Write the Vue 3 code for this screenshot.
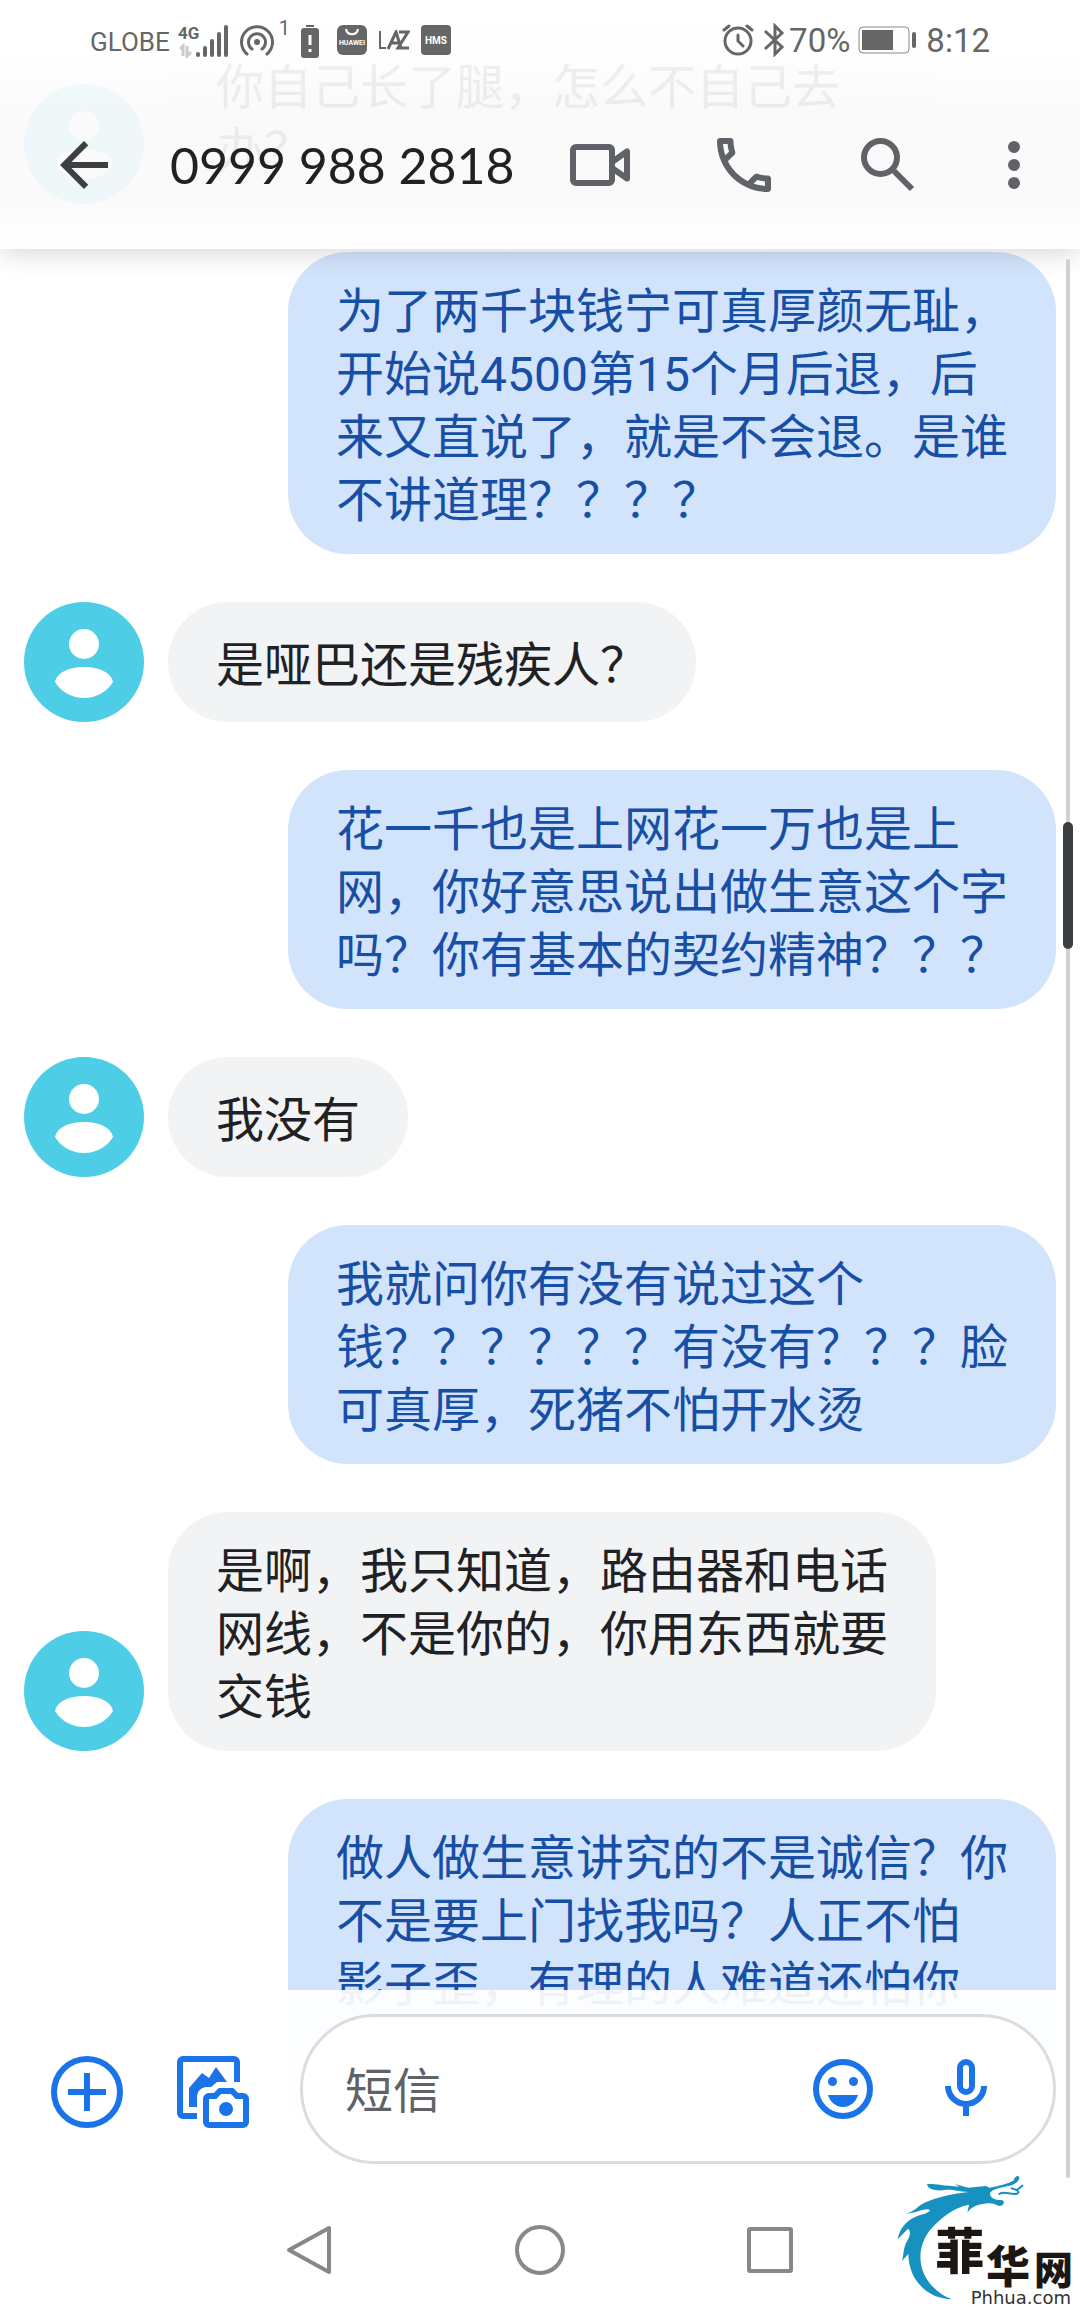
<template>
  <main class="screen">

    <!-- CONVERSATION -->
    <ul class="messages">
      <li
        v-for="(message, index) in messages"
        :key="index"
        class="message"
        :class="message.from"
      >
        <svg v-if="message.from === 'them'" class="avatar" viewBox="0 0 120 120" aria-hidden="true">
          <circle cx="60" cy="60" r="60" fill="#4ecde6" />
          <circle cx="60" cy="42" r="15" fill="#fff" />
          <path d="M31 80C33 70 46 65 60 65s27 5 29 15c-6 10-17 16-29 16s-23-6-29-16z" fill="#fff" />
        </svg>
        <p class="bubble">{{ message.text }}</p>
      </li>
    </ul>

    <div class="scroll-track">
      <div class="scroll-thumb"></div>
    </div>

    <!-- HEADER -->
    <header class="header">
      <div class="status-bar">
        <div class="status-left">
          <span class="carrier">GLOBE</span>
          <svg class="signal" viewBox="0 0 52 36" aria-hidden="true">
            <text x="0" y="17" class="network">4G</text>
            <path d="M2 27l3-3v10M9 24v10l4-4" fill="none" stroke="#ccc" stroke-width="3" />
            <path d="M20 32v1M27 26v7M34 19v14M41 12v21M48 5v28" stroke="#666" stroke-width="4" stroke-linecap="round" />
          </svg>
          <svg class="hotspot" viewBox="0 0 36 36" fill="none" stroke="#666" stroke-width="3" stroke-linecap="round" aria-hidden="true">
            <path d="M8 32a15.500 15.500 0 1 1 20 0" />
            <path d="M13 27a8.500 8.500 0 1 1 10 0" />
            <circle cx="18" cy="20" r="3" fill="#666" stroke="none" />
          </svg>
          <span class="hotspot-count">1</span>
          <svg class="battery-alert" viewBox="0 0 18 36" aria-hidden="true">
            <path d="M5 3h8v2H5z" fill="#666" />
            <rect y="6" width="18" height="30" rx="3" fill="#666" />
            <path d="M9 13v10M9 27v3" stroke="#fff" stroke-width="3" />
          </svg>
          <svg class="badge-huawei" viewBox="0 0 30 30" aria-hidden="true">
            <rect width="30" height="30" rx="6" fill="#666" />
            <path d="M9 4c1 7 11 7 12 0" fill="none" stroke="#fff" stroke-width="2" />
            <text x="15" y="20" text-anchor="middle" class="huawei">HUAWEI</text>
          </svg>
          <svg class="badge-laz" viewBox="0 0 32 20" fill="none" stroke="#666" aria-label="LAZ">
            <path d="M2 1v17h6" stroke-width="2" />
            <path d="M10 19L18 2l5 16M13 13h8M21 2h9L20 18h11" stroke-width="3" />
          </svg>
          <svg class="badge-hms" viewBox="0 0 30 30" aria-hidden="true">
            <rect width="30" height="30" rx="4" fill="#666" />
            <text x="15" y="19" text-anchor="middle" class="hms">HMS</text>
          </svg>
        </div>
        <div class="status-right">
          <svg class="alarm" viewBox="0 0 32 32" fill="none" stroke="#666" stroke-width="3" stroke-linecap="round" aria-hidden="true">
            <circle cx="16" cy="17" r="13" />
            <path d="M16 11v6l5 5M2 6l5-4M30 6l-5-4" />
          </svg>
          <svg class="bluetooth" viewBox="0 0 22 34" fill="none" stroke="#666" stroke-width="3" aria-hidden="true">
            <path d="M2 8l17 16-7 7V3l7 7L2 26" />
          </svg>
          <span>70%</span>
          <svg class="battery" viewBox="0 0 60 28" aria-hidden="true">
            <rect x="1" y="1" width="50" height="26" rx="4" fill="none" stroke="#888" />
            <rect x="4" y="4" width="31" height="20" fill="#666" />
            <rect x="54" y="6" width="4" height="16" rx="2" fill="#666" />
          </svg>
          <span>8:12</span>
        </div>
      </div>

      <div class="title-bar">
        <button class="back" aria-label="返回">
          <svg class="icon" viewBox="0 0 24 24" fill="#3c4043">
            <path d="M20 11H7.830l5.590-5.590L12 4l-8 8 8 8 1.410-1.410L7.830 13H20z" />
          </svg>
        </button>
        <h1 class="title">0999 988 2818</h1>
        <nav class="actions">
          <button aria-label="视频通话">
            <svg class="icon" viewBox="0 0 24 24" fill="none" stroke="#5f6368" stroke-width="2">
              <rect x="3" y="6" width="13" height="12" rx="1" />
              <path d="M16 11l5-3.500v9L16 13" stroke-linejoin="round" />
            </svg>
          </button>
          <button aria-label="拨打电话">
            <svg class="icon" viewBox="0 0 24 24" fill="#5f6368">
              <path d="M6.540 5c.060.890.210 1.760.450 2.590l-1.200 1.200c-.410-1.200-.670-2.470-.760-3.790h1.510m9.860 12.020c.850.240 1.720.390 2.600.450v1.490c-1.320-.090-2.590-.350-3.800-.750l1.200-1.190M7.500 3H4c-.550 0-1 .450-1 1 0 9.390 7.610 17 17 17 .550 0 1-.450 1-1v-3.490c0-.550-.450-1-1-1-1.240 0-2.450-.200-3.570-.570-.100-.040-.210-.050-.310-.050-.260 0-.510.100-.710.290l-2.200 2.200c-2.830-1.450-5.150-3.760-6.590-6.590l2.200-2.200c.280-.280.360-.670.250-1.020C8.700 6.450 8.500 5.250 8.500 4c0-.550-.450-1-1-1z" />
            </svg>
          </button>
          <button aria-label="搜索">
            <svg class="icon" viewBox="0 0 24 24" fill="none" stroke="#5f6368" stroke-width="2">
              <circle cx="9.500" cy="9.500" r="5.500" />
              <path d="M14 14l6 6" />
            </svg>
          </button>
          <button class="more" aria-label="更多">
            <svg class="icon" viewBox="0 0 24 24" fill="#5f6368">
              <circle cx="12" cy="6" r="2" />
              <circle cx="12" cy="12" r="2" />
              <circle cx="12" cy="18" r="2" />
            </svg>
          </button>
        </nav>
      </div>
    </header>

    <!-- COMPOSER AND SYSTEM KEYS -->
    <footer class="footer">
      <form class="composer" @submit.prevent>
        <div class="attach">
          <button type="button" aria-label="添加">
            <svg class="icon" viewBox="0 0 72 72" fill="none" stroke="#1a73e8" stroke-width="6">
              <circle cx="36" cy="36" r="33" />
              <path d="M36 17v38M17 36h38" />
            </svg>
          </button>
          <button type="button" aria-label="图片和相机">
            <svg class="icon" viewBox="0 0 72 72">
              <path d="M60 26V6a3 3 0 0 0-3-3H6a3 3 0 0 0-3 3v51a3 3 0 0 0 3 3h14" fill="none" stroke="#1a73e8" stroke-width="6" />
              <path d="M12 51V32l13-15 7 5 7-11 11 15H40l-6 5h-5c-6 1-9 5-9 10v10z" fill="#1a73e8" />
              <path d="M32 40h6l5-5h12l5 5h6a3 3 0 0 1 3 3v23a3 3 0 0 1-3 3H32a3 3 0 0 1-3-3V43a3 3 0 0 1 3-3z" fill="#fff" stroke="#1a73e8" stroke-width="6" />
              <circle cx="49" cy="53" r="7" fill="#1a73e8" />
            </svg>
          </button>
        </div>
        <div class="field">
          <input v-model="draft" class="input" type="text" placeholder="短信" aria-label="短信" />
          <button type="button" aria-label="表情">
            <svg class="icon" viewBox="0 0 24 24" fill="#1a73e8">
              <circle cx="12" cy="12" r="9" fill="none" stroke="#1a73e8" stroke-width="2" />
              <circle cx="8.500" cy="9.500" r="1.500" />
              <circle cx="15.500" cy="9.500" r="1.500" />
              <path d="M7 14h10c-.700 2.400-2.700 4-5 4s-4.300-1.600-5-4z" />
            </svg>
          </button>
          <button type="button" aria-label="语音">
            <svg class="icon" viewBox="0 0 24 24" fill="none" stroke="#1a73e8" stroke-width="2">
              <rect x="10" y="3" width="4" height="10" rx="2" />
              <path d="M6 11c0 3.300 2.700 6 6 6s6-2.700 6-6M12 17v4" />
            </svg>
          </button>
        </div>
      </form>

      <nav class="system-keys">
        <button aria-label="系统返回">
          <svg viewBox="0 0 50 50"><path d="M44 3v44L4 25z" /></svg>
        </button>
        <button aria-label="主屏幕">
          <svg viewBox="0 0 50 50"><circle cx="25" cy="25" r="23" /></svg>
        </button>
        <button aria-label="最近任务">
          <svg viewBox="0 0 50 50"><rect x="4" y="4" width="42" height="42" rx="1" /></svg>
        </button>
      </nav>
    </footer>

    <!-- SITE LOGO -->
    <svg class="logo" viewBox="0 0 660 486" aria-label="菲华网">
      <path
        d="M201 103C215 99 240 106 298 110L284 102 325 113 378 108 388 113C420 108 448 98 460 92 464 80 474 74 478 81 478 92 470 100 455 106 430 112 396 116 390 130 390 143 400 150 428 151 436 157 430 168 417 168 405 162 395 158 380 160 365 164 340 162 322 188L327 164C285 170 240 205 210 240 172 290 172 350 208 398 226 422 250 438 276 448 240 447 205 434 180 405 158 382 146 350 145 312L126 333C132 310 130 290 142 272 152 255 152 243 144 236L113 268C118 236 140 210 172 198 190 192 206 190 210 180 196 172 180 186 138 191 165 184 172 168 194 158 230 142 275 132 325 126 290 124 270 116 250 121 225 123 203 118 201 103Z"
        fill="#1791bf"
      />
      <path
        d="M418 132c14-10 30 2 50 0 8-1 10-8 3-12l-16-5M470 121l17-14"
        fill="none"
        stroke="#1791bf"
        stroke-width="6"
        stroke-linecap="round"
      />
      <text x="226" y="358" class="brush large">菲</text>
      <text x="378" y="400" class="brush">华</text>
      <text x="522" y="403" class="block">网</text>
      <text x="332" y="463" class="domain">Phhua.com</text>
    </svg>

  </main>
</template>

<script setup>
import { ref } from "vue"

const draft = ref("")

const messages = [
  {
    from: "them",
    text: "你自己长了腿，怎么不自己去办？"
  },
  {
    from: "me",
    text: "为了两千块钱宁可真厚颜无耻，开始说4500第15个月后退，后来又直说了，就是不会退。是谁不讲道理？？？？"
  },
  {
    from: "them",
    text: "是哑巴还是残疾人？"
  },
  {
    from: "me",
    text: "花一千也是上网花一万也是上网，你好意思说出做生意这个字吗？你有基本的契约精神？？？"
  },
  {
    from: "them",
    text: "我没有"
  },
  {
    from: "me",
    text: "我就问你有没有说过这个钱？？？？？？有没有？？？脸可真厚，死猪不怕开水烫"
  },
  {
    from: "them",
    text: "是啊，我只知道，路由器和电话网线，不是你的，你用东西就要交钱"
  },
  {
    from: "me",
    text: "做人做生意讲究的不是诚信？你不是要上门找我吗？人正不怕\n影子歪，有理的人难道还怕你"
  }
]
</script>

<style>
body {
  margin: 0;
  background: #fff;
}
</style>

<style scoped>
.screen {
  position: relative;
  height: 100vh;
  overflow: hidden;
  background: #fff;
  font-family: Roboto, "Noto Sans CJK SC", sans-serif;
  color: #202124;
}

button {
  display: flex;
  align-items: center;
  justify-content: center;
  padding: 0;
  border: none;
  background: none;
  cursor: pointer;
}

.icon {
  display: block;
  width: 72px;
  height: 72px;
}

/* conversation */
.messages {
  display: flex;
  flex-direction: column;
  gap: 48px;
  margin: 0;
  padding: 28px 24px 0;
  list-style: none;
}

.message {
  display: flex;
  align-items: flex-end;
  gap: 24px;
}

.message.me {
  justify-content: flex-end;
}

.avatar {
  flex: none;
  width: 120px;
  height: 120px;
}

.bubble {
  box-sizing: border-box;
  display: flex;
  align-items: center;
  max-width: 768px;
  min-height: 120px;
  margin: 0;
  padding: 28px 48px 22px;
  border-radius: 60px;
  background: #f1f3f4;
  font-size: 48px;
  line-height: 63px;
  white-space: pre-line;
  text-spacing-trim: space-all;
}

.me .bubble {
  background: #d2e3fc;
  color: #174ea6;
}

.message:last-child .bubble {
  align-items: flex-start;
  min-height: 360px;
}

.scroll-track {
  position: absolute;
  top: 259px;
  right: 10px;
  bottom: 134px;
  z-index: 3;
  width: 4px;
  border-radius: 2px;
  background: #d0d1d2;
}

.scroll-thumb {
  position: absolute;
  top: 563px;
  left: -3px;
  width: 10px;
  height: 127px;
  border-radius: 5px;
  background: #3c4043;
}

/* header */
.header {
  position: absolute;
  top: 0;
  left: 0;
  right: 0;
  background: linear-gradient(
    rgba(255, 255, 255, 0.93) 50px,
    rgba(250, 250, 250, 0.93) 110px,
    rgba(250, 250, 250, 0.93) 200px,
    rgba(255, 255, 255, 0.97)
  );
  box-shadow: 0 4px 24px rgba(0, 0, 0, 0.16);
}

.status-bar {
  display: flex;
  justify-content: space-between;
  align-items: center;
  height: 80px;
  padding: 0 90px;
  color: #666;
}

.status-left,
.status-right {
  display: flex;
  align-items: center;
}

.carrier {
  margin-right: 8px;
  padding-top: 4px;
  font-size: 26px;
}

.signal {
  width: 52px;
  height: 36px;
}

.network {
  font: bold 17px Roboto, sans-serif;
  fill: #666;
}

.hotspot {
  width: 36px;
  height: 36px;
  margin-left: 9px;
}

.hotspot-count {
  align-self: flex-start;
  width: 22px;
  margin-top: -4px;
  margin-left: 4px;
  font-size: 20px;
  line-height: 20px;
}

.battery-alert {
  width: 18px;
  height: 36px;
}

.badge-huawei,
.badge-hms {
  width: 30px;
  height: 30px;
}

.badge-huawei {
  margin-left: 18px;
}

.badge-laz {
  width: 32px;
  height: 20px;
  margin: 0 11px;
}

.huawei {
  font: bold 7px Roboto, sans-serif;
  fill: #fff;
}

.hms {
  font: bold 10px Roboto, sans-serif;
  fill: #fff;
}

.status-right {
  font-size: 33px;
}

.alarm {
  width: 32px;
  height: 32px;
}

.bluetooth {
  width: 22px;
  height: 34px;
  margin: 0 4px 0 9px;
}

.battery {
  width: 60px;
  height: 28px;
  margin: 0 8px;
}

.title-bar {
  display: flex;
  align-items: center;
  height: 169px;
  padding: 0 12px 0 48px;
}

.title {
  flex: 1;
  margin: 0 0 0 50px;
  font: 400 50px/64px Lato, sans-serif;
  white-space: nowrap;
}

.actions {
  display: flex;
}

.actions button {
  width: 144px;
  height: 144px;
}

.actions .more {
  width: 108px;
}

/* composer */
.footer {
  position: absolute;
  left: 0;
  right: 0;
  bottom: 0;
  background: linear-gradient(rgba(255, 255, 255, 0.92), #fff 150px);
}

.composer {
  display: flex;
  align-items: center;
  padding: 24px 24px 0 51px;
}

.attach {
  display: flex;
  gap: 54px;
  margin-right: 51px;
  padding-top: 6px;
}

.field {
  flex: 1;
  box-sizing: border-box;
  display: flex;
  align-items: center;
  gap: 51px;
  min-width: 0;
  height: 150px;
  padding: 0 51px 0 42px;
  border: 3px solid #dadce0;
  border-radius: 75px;
  background: #fff;
}

.input {
  flex: 1;
  min-width: 0;
  padding: 4px 0 0;
  border: none;
  outline: none;
  background: none;
  font: 48px/63px Roboto, "Noto Sans CJK SC", sans-serif;
  color: #202124;
}

.input::placeholder {
  color: #5f6368;
  opacity: 1;
}

.system-keys {
  display: flex;
  justify-content: center;
  gap: 180px;
  padding: 61px 0 37px;
}

.system-keys svg {
  display: block;
  width: 50px;
  height: 50px;
  fill: none;
  stroke: #888;
  stroke-width: 4px;
  stroke-linejoin: round;
}

/* logo */
.logo {
  position: absolute;
  right: 0;
  bottom: 0;
  width: 220px;
  height: 162px;
}

.brush {
  font: 900 132px "Noto Sans CJK SC", sans-serif;
  fill: #1d1714;
}

.brush.large {
  font-size: 147px;
}

.block {
  font: 900 117px "Noto Sans CJK SC", sans-serif;
  fill: #1d1714;
}

.domain {
  font: 54px "DejaVu Sans", sans-serif;
  fill: #333;
}
</style>
